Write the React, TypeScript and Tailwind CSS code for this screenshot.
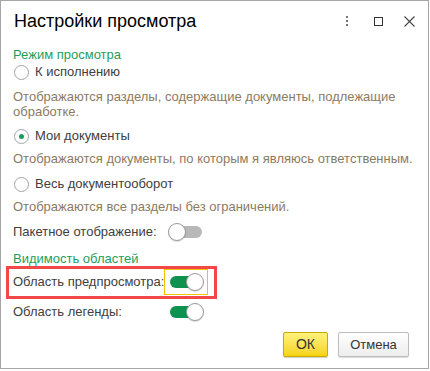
import React from "react"

const font = { fontFamily: '"Liberation Sans", Arial, sans-serif' }

function Radio({ checked, label }: { checked?: boolean; label: string }) {
  return (
    <div className="flex h-[20px] items-center">
      <span className="ml-[1px] flex h-[15px] w-[15px] items-center justify-center rounded-full border border-[#a3a3a3] bg-white">
        {checked && <span className="h-[5px] w-[5px] rounded-full bg-[#16a05a]" />}
      </span>
      <span className="ml-[6px] text-[13px] leading-4 text-[#404040]">{label}</span>
    </div>
  )
}

function Toggle({ on, focused }: { on?: boolean; focused?: boolean }) {
  return (
    <div className={`border p-[3px] ${focused ? "border-[#f2c200]" : "border-transparent"}`}>
      <div className="relative h-[18px] w-[36px]">
        <div className={`absolute left-[2px] right-[2px] top-[3px] h-[12px] rounded-full ${on ? "bg-[#0f9150]" : "bg-[#b8b8b8]"}`} />
        <div
          className={`absolute top-0 h-[18px] w-[18px] rounded-full border border-[#9a9a9a] bg-white shadow-[0_1px_1px_rgba(0,0,0,0.15)] ${on ? "right-0" : "left-0"}`}
        />
      </div>
    </div>
  )
}

function ToggleRow({ label, on, focused }: { label: string; on?: boolean; focused?: boolean }) {
  return (
    <div className="flex items-center">
      <span className="w-[151px] shrink-0 whitespace-nowrap text-[13px] leading-4 text-[#404040]">{label}</span>
      <Toggle on={on} focused={focused} />
    </div>
  )
}

function Hint({ children }: { children: React.ReactNode }) {
  return <p className="text-[13px] leading-[15px] text-[#8b7b62]">{children}</p>
}

function Section({ children }: { children: React.ReactNode }) {
  return <div className="text-[13px] leading-4 text-[#1e9e5a]">{children}</div>
}

export default function App() {
  return (
    <div className="h-[371px] w-[430px] bg-white" style={font}>
      <div className="flex h-[369px] w-[429px] flex-col border border-[#a6a6a6] bg-white">
        {/* header */}
        <div className="mt-[8px] flex h-[24px] items-center pl-[13px] pr-[13px]">
          <h1 className="flex-1 text-[18px] leading-[24px] text-black">Настройки просмотра</h1>
          <div className="flex items-center">
            <span className="flex flex-col gap-[2px]">
              <span className="h-[2px] w-[2px] bg-[#777]" />
              <span className="h-[2px] w-[2px] bg-[#777]" />
              <span className="h-[2px] w-[2px] bg-[#777]" />
            </span>
            <span className="ml-[26px] h-[9px] w-[9px] border border-[#333]" />
            <svg className="ml-[21px]" width="11" height="11" viewBox="0 0 11 11">
              <path d="M0.5 0.5 L10.5 10.5 M10.5 0.5 L0.5 10.5" stroke="#444" strokeWidth="1.1" />
            </svg>
          </div>
        </div>

        {/* body */}
        <div className="flex flex-1 flex-col px-[12px]">
          <div className="mt-[14px]">
            <Section>Режим просмотра</Section>
          </div>
          <div className="-mt-[1px]">
            <Radio label="К исполнению" />
          </div>
          <div className="mt-[7px]">
            <Hint>
              Отображаются разделы, содержащие документы, подлежащие
              <br />
              обработке.
            </Hint>
          </div>
          <div className="mt-[7px]">
            <Radio checked label="Мои документы" />
          </div>
          <div className="mt-[5px]">
            <Hint>Отображаются документы, по которым я являюсь ответственным.</Hint>
          </div>
          <div className="mt-[8px]">
            <Radio label="Весь документооборот" />
          </div>
          <div className="mt-[5px]">
            <Hint>Отображаются все разделы без ограничений.</Hint>
          </div>
          <div className="mt-[5px]">
            <ToggleRow label="Пакетное отображение:" />
          </div>
          <div className="mt-[6px]">
            <Section>Видимость областей</Section>
          </div>
          <div className="relative mt-[2px]">
            <div className="pointer-events-none absolute -left-[7px] -top-[3px] h-[33px] w-[211px] border-[3px] border-[#f34848]" />
            <ToggleRow label="Область предпросмотра:" on focused />
          </div>
          <div className="mt-[4px]">
            <ToggleRow label="Область легенды:" on />
          </div>

          <div className="mb-[11px] mt-auto flex justify-end gap-[10px] pr-[7px]">
            <button className="h-[25px] w-[45px] rounded-[2px] border border-[#c9aa00] bg-gradient-to-b from-[#fff27a] to-[#f5d300] text-[14px] text-[#333] shadow-[0_1px_1px_rgba(0,0,0,0.2)]">
              ОК
            </button>
            <button className="h-[25px] w-[71px] rounded-[2px] border border-[#bdbdbd] bg-gradient-to-b from-white to-[#ededed] text-[13px] text-[#333] shadow-[0_1px_1px_rgba(0,0,0,0.15)]">
              Отмена
            </button>
          </div>
        </div>
      </div>
    </div>
  )
}
